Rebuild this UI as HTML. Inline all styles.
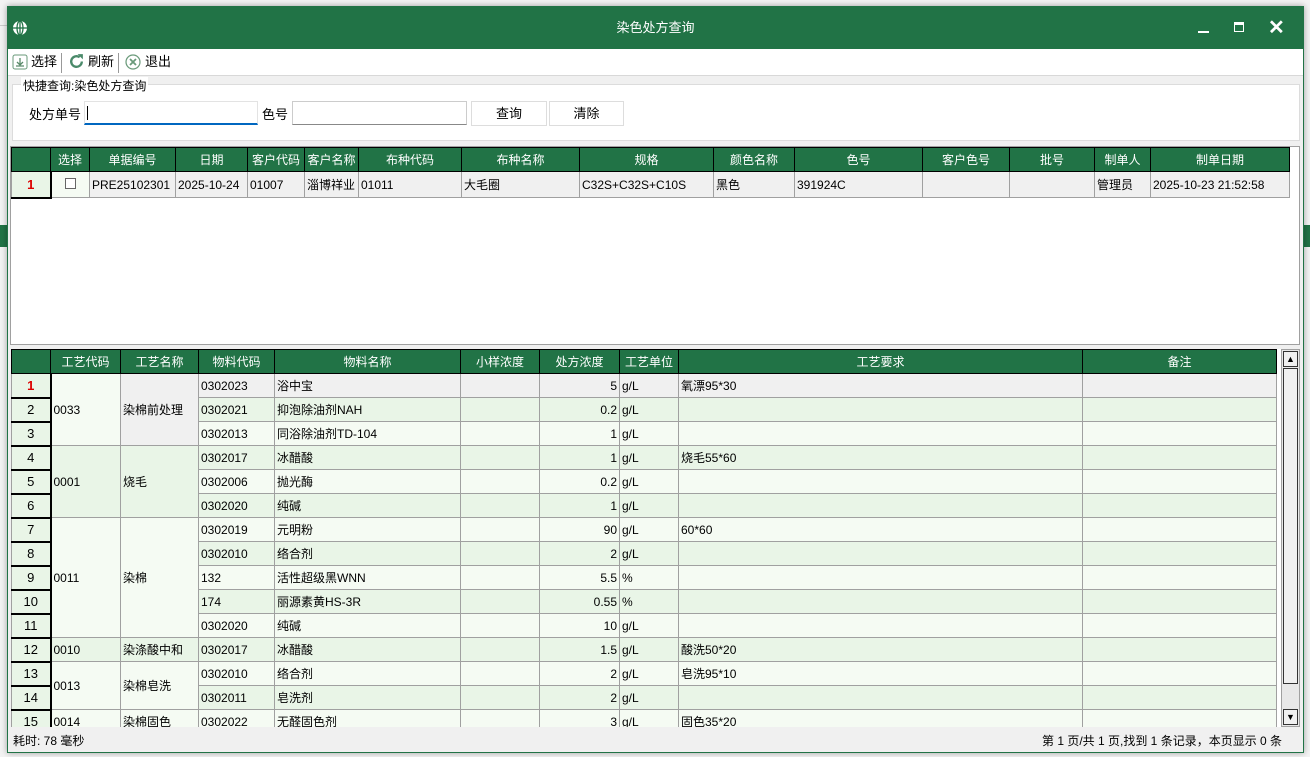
<!DOCTYPE html>
<html><head><meta charset="utf-8"><style>
*{box-sizing:border-box;margin:0;padding:0}
body{width:1310px;height:757px;overflow:hidden;background:#f3f3f3;font-family:"Liberation Sans","Noto Sans CJK SC",sans-serif;font-size:12px;color:#000;position:relative}
.abs{position:absolute}
#win{left:7px;top:6px;width:1297px;height:747px;background:#f0f0f0;border:1px solid #217346;box-shadow:0 0 6px rgba(0,0,0,.35)}
#title{left:0;top:0;width:1295px;height:42px;background:#217346;color:#fff;font-size:13px;text-align:center;line-height:42px}
#tool{left:0;top:42px;width:1295px;height:27px;background:#fff;border-bottom:1px solid #d8d8d8}
.tb{position:absolute;top:4px;font-size:13px;line-height:18px}
table{border-collapse:collapse;table-layout:fixed;position:absolute}
td,th{overflow:hidden;white-space:nowrap;height:24px;padding:0 2px;font-weight:normal;font-size:12px}
th{background:#217346;color:#fff;border:1px solid #000;text-align:center}
td{border:1px solid #a0a0a0}
td.rh{background:#e9f5e7;border:1px solid #a0a0a0;border-right:2px solid #000;border-bottom:2px solid #000;text-align:center;font-size:13px}
.r{text-align:right}
.a{background:#f5fbf3}.b{background:#e9f5e7}.g{background:#f0f0f0}
input{outline:none}
</style></head><body>
<div class="abs" style="left:0;top:25px;width:7px;height:1px;background:#ccc"></div>
<div class="abs" style="left:0;top:225px;width:7px;height:22px;background:#217346"></div>
<div class="abs" style="left:1304px;top:225px;width:6px;height:22px;background:#217346"></div>
<div id="win" class="abs">
 <div id="title" class="abs">染色处方查询
  <svg class="abs" style="left:4px;top:13px" width="16" height="16" viewBox="0 0 16 16"><circle cx="8" cy="8" r="7" fill="#fff"/><g stroke="#217346" stroke-width="1.3" fill="none"><ellipse cx="8" cy="8" rx="3" ry="7"/><line x1="1" y1="8" x2="15" y2="8"/><line x1="8" y1="1" x2="8" y2="15"/></g></svg>
  <div class="abs" style="left:1190px;top:24px;width:11px;height:2px;background:#fff"></div>
  <div class="abs" style="left:1226px;top:15px;width:10px;height:10px;border:1.5px solid #fff;border-top-width:3px"></div>
  <div class="abs" style="left:1260px;top:0;font-size:20px;line-height:42px;font-weight:bold">✕</div>
 </div>
 <div id="tool" class="abs">
  <svg class="abs" style="left:4px;top:5px" width="16" height="16" viewBox="0 0 16 16"><rect x="1" y="1" width="14" height="14" rx="2" fill="#fff" stroke="#6a9a7a"/><path d="M8 4v7M5 8l3 3 3-3M4 12h8" stroke="#5a8a6a" fill="none" stroke-width="1.3"/></svg>
  <span class="tb" style="left:23px">选择</span>
  <div class="abs" style="left:53px;top:4px;width:1px;height:20px;background:#999"></div>
  <svg class="abs" style="left:60px;top:4px" width="17" height="17" viewBox="0 0 16 16"><path d="M13 8a5 5 0 1 1-2-4" stroke="#4a8a6a" stroke-width="2.2" fill="none"/><path d="M9 1h5v5z" fill="#4a8a6a"/></svg>
  <span class="tb" style="left:80px">刷新</span>
  <div class="abs" style="left:110px;top:4px;width:1px;height:20px;background:#999"></div>
  <svg class="abs" style="left:117px;top:5px" width="16" height="16" viewBox="0 0 16 16"><circle cx="8" cy="8" r="7" fill="#fff" stroke="#6a9a7a" stroke-width="1.2"/><path d="M5 5l6 6M11 5l-6 6" stroke="#6a9a7a" stroke-width="1.8"/></svg>
  <span class="tb" style="left:137px">退出</span>
 </div>
 <div class="abs" style="left:4px;top:77px;width:1288px;height:57px;border:1px solid #dcdcdc;background:#fff"></div>
 <span class="abs" style="left:13px;top:70px;background:#fff;padding:0 2px;font-size:12px">快捷查询:染色处方查询</span>
 <span class="abs" style="left:21px;top:97px;font-size:13px">处方单号</span>
 <div class="abs" style="left:76px;top:94px;width:174px;height:24px;background:#fff;border:1px solid #e3e3e3;border-bottom:2px solid #0067c0"><div style="position:absolute;left:2px;top:4px;width:1px;height:14px;background:#000"></div></div>
 <span class="abs" style="left:254px;top:97px;font-size:13px">色号</span>
 <div class="abs" style="left:284px;top:94px;width:175px;height:24px;background:#fff;border:1px solid #ccc;border-bottom-color:#888"></div>
 <div class="abs" style="left:463px;top:94px;width:76px;height:25px;background:#fff;border:1px solid #ddd;text-align:center;line-height:23px;font-size:13px">查询</div>
 <div class="abs" style="left:541px;top:94px;width:75px;height:25px;background:#fff;border:1px solid #ddd;text-align:center;line-height:23px;font-size:13px">清除</div>
 <div class="abs" style="left:2px;top:139px;width:1290px;height:199px;background:#fff;border:1px solid #a0a0a0"></div>
 <table style="left:3px;top:140px;width:1278px">
  <colgroup><col style="width:39px"><col style="width:39px"><col style="width:86px"><col style="width:72px"><col style="width:57px"><col style="width:54px"><col style="width:103px"><col style="width:118px"><col style="width:134px"><col style="width:81px"><col style="width:128px"><col style="width:87px"><col style="width:85px"><col style="width:56px"><col style="width:139px"></colgroup>
  <tr><th></th><th>选择</th><th>单据编号</th><th>日期</th><th>客户代码</th><th>客户名称</th><th>布种代码</th><th>布种名称</th><th>规格</th><th>颜色名称</th><th>色号</th><th>客户色号</th><th>批号</th><th>制单人</th><th>制单日期</th></tr>
  <tr class="g" style="height:26px"><td class="rh" style="color:#d00;font-weight:bold">1</td><td class="a" style="text-align:center"><span style="display:inline-block;width:11px;height:11px;border:1px solid #666;background:#fff"></span></td><td>PRE25102301</td><td>2025-10-24</td><td>01007</td><td>淄博祥业</td><td>01011</td><td>大毛圈</td><td>C32S+C32S+C10S</td><td>黑色</td><td>391924C</td><td></td><td></td><td>管理员</td><td>2025-10-23 21:52:58</td></tr>
 </table>
 <div class="abs" style="left:3px;top:342px;width:1270px;height:378px;overflow:hidden;background:#fff">
 <table style="left:0;top:0;width:1265px">
  <colgroup><col style="width:39px"><col style="width:70px"><col style="width:78px"><col style="width:76px"><col style="width:186px"><col style="width:79px"><col style="width:80px"><col style="width:59px"><col style="width:404px"><col style="width:194px"></colgroup>
  <tr><th></th><th>工艺代码</th><th>工艺名称</th><th>物料代码</th><th>物料名称</th><th>小样浓度</th><th>处方浓度</th><th>工艺单位</th><th>工艺要求</th><th>备注</th></tr>
  <tr class="g"><td class="rh" style="color:#d00;font-weight:bold">1</td><td rowspan="3" class="a">0033</td><td rowspan="3" class="g">染棉前处理</td><td>0302023</td><td>浴中宝</td><td></td><td class="r">5</td><td>g/L</td><td>氧漂95*30</td><td></td></tr>
  <tr class="b"><td class="rh">2</td><td>0302021</td><td>抑泡除油剂NAH</td><td></td><td class="r">0.2</td><td>g/L</td><td></td><td></td></tr>
  <tr class="a"><td class="rh">3</td><td>0302013</td><td>同浴除油剂TD-104</td><td></td><td class="r">1</td><td>g/L</td><td></td><td></td></tr>
  <tr class="b"><td class="rh">4</td><td rowspan="3" class="b">0001</td><td rowspan="3" class="b">烧毛</td><td>0302017</td><td>冰醋酸</td><td></td><td class="r">1</td><td>g/L</td><td>烧毛55*60</td><td></td></tr>
  <tr class="a"><td class="rh">5</td><td>0302006</td><td>抛光酶</td><td></td><td class="r">0.2</td><td>g/L</td><td></td><td></td></tr>
  <tr class="b"><td class="rh">6</td><td>0302020</td><td>纯碱</td><td></td><td class="r">1</td><td>g/L</td><td></td><td></td></tr>
  <tr class="a"><td class="rh">7</td><td rowspan="5" class="a">0011</td><td rowspan="5" class="a">染棉</td><td>0302019</td><td>元明粉</td><td></td><td class="r">90</td><td>g/L</td><td>60*60</td><td></td></tr>
  <tr class="b"><td class="rh">8</td><td>0302010</td><td>络合剂</td><td></td><td class="r">2</td><td>g/L</td><td></td><td></td></tr>
  <tr class="a"><td class="rh">9</td><td>132</td><td>活性超级黑WNN</td><td></td><td class="r">5.5</td><td>%</td><td></td><td></td></tr>
  <tr class="b"><td class="rh">10</td><td>174</td><td>丽源素黄HS-3R</td><td></td><td class="r">0.55</td><td>%</td><td></td><td></td></tr>
  <tr class="a"><td class="rh">11</td><td>0302020</td><td>纯碱</td><td></td><td class="r">10</td><td>g/L</td><td></td><td></td></tr>
  <tr class="b"><td class="rh">12</td><td>0010</td><td>染涤酸中和</td><td>0302017</td><td>冰醋酸</td><td></td><td class="r">1.5</td><td>g/L</td><td>酸洗50*20</td><td></td></tr>
  <tr class="a"><td class="rh">13</td><td rowspan="2" class="a">0013</td><td rowspan="2" class="a">染棉皂洗</td><td>0302010</td><td>络合剂</td><td></td><td class="r">2</td><td>g/L</td><td>皂洗95*10</td><td></td></tr>
  <tr class="b"><td class="rh">14</td><td>0302011</td><td>皂洗剂</td><td></td><td class="r">2</td><td>g/L</td><td></td><td></td></tr>
  <tr class="a"><td class="rh">15</td><td>0014</td><td>染棉固色</td><td>0302022</td><td>无醛固色剂</td><td></td><td class="r">3</td><td>g/L</td><td>固色35*20</td><td></td></tr>
 </table>
 </div>
 <div class="abs" style="left:1273px;top:342px;width:19px;height:378px;background:#e8e8e8;border:1px solid #a0a0a0">
  <div class="abs" style="left:1px;top:1px;width:15px;height:16px;background:#f0f0f0;border:1px solid #333;text-align:center;font-size:9px;line-height:14px">▲</div>
  <div class="abs" style="left:1px;top:18px;width:15px;height:316px;background:#f0f0f0;border:1px solid #333"></div>
  <div class="abs" style="left:1px;top:359px;width:15px;height:16px;background:#f0f0f0;border:1px solid #333;text-align:center;font-size:9px;line-height:14px">▼</div>
 </div>
 <span class="abs" style="left:5px;top:725px;font-size:12px">耗时: 78 毫秒</span>
 <span class="abs" style="left:1034px;top:725px;font-size:12px;width:252px;overflow:hidden;white-space:nowrap">第 1 页/共 1 页,找到 1 条记录，本页显示 0 条</span>
</div>
</body></html>
